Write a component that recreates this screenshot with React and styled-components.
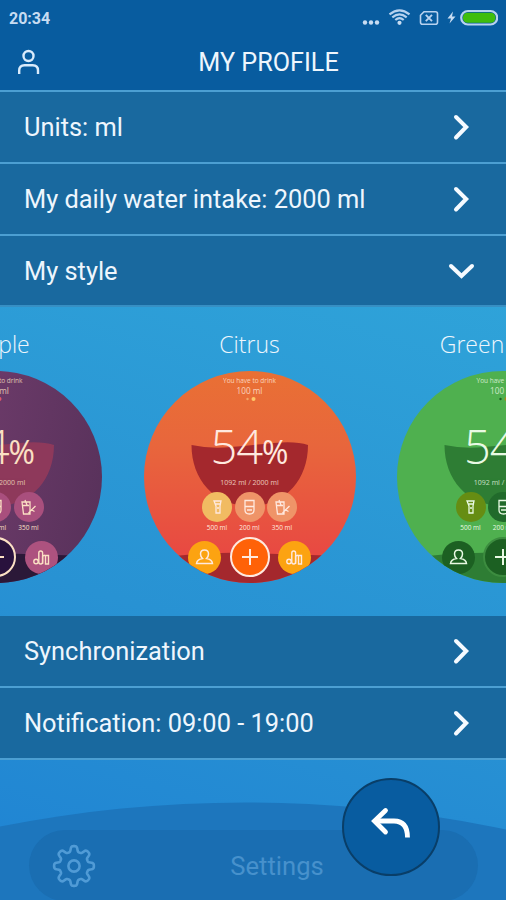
import React from "react";
import styled, { createGlobalStyle } from "styled-components";

const GlobalStyle = createGlobalStyle`
  * {
    box-sizing: border-box;
  }
  body {
    margin: 0;
    background: #0a5c9f;
  }
`;
const Screen = styled.div`
  width: 506px;
  height: 900px;
  overflow: hidden;
  display: flex;
  flex-direction: column;
  font-family: Roboto, sans-serif;
  color: #eef6fd;
  background: linear-gradient(197deg, #2fa3d9 28%, #2892d3 68%, #2085d3 95%);
`;
const StatusBar = styled.div`
  height: 36px;
  padding: 0 8px 0 9px;
  display: flex;
  align-items: center;
  justify-content: space-between;
  font-size: 16px;
  font-weight: 700;
  color: #c7dcf2;
`;
const Header = styled.div`
  height: 92px;
  flex: none;
  background: #085c9f;
  border-bottom: 2px solid #4c9fd2;
`;
const TitleBar = styled.div`
  height: 54px;
  padding: 0 18px 2px;
  display: flex;
  align-items: center;
`;
const Title = styled.div`
  flex: 1;
  padding: 2px 0 0 9px;
  text-align: center;
  font-size: 25.2px;
  line-height: 30px;
`;
const Row = styled.div`
  height: ${(props) => props.$height || 72}px;
  flex: none;
  padding: 0 31px 0 24px;
  display: flex;
  align-items: center;
  justify-content: space-between;
  font-size: 25.4px;
  background: #19699f;
  border-bottom: 2px solid ${(props) => props.$line || "#4c9fd2"};
`;
const Carousel = styled.div`
  height: 309px;
  flex: none;
  padding: 22px 7px 0 0;
  display: flex;
  justify-content: center;
  overflow: hidden;
`;
const Theme = styled.div`
  width: 253.5px;
  flex: none;
  display: flex;
  flex-direction: column;
  align-items: center;
  font-family: "Open Sans", sans-serif;
`;
const ThemeName = styled.div`
  height: 42px;
  padding-right: ${(props) => props.$shift || 0}px;
  line-height: 30px;
  font-size: 23px;
  font-weight: 300;
  white-space: nowrap;
`;
const Disc = styled.div`
  position: relative;
  width: 212px;
  height: 212px;
  border-radius: 50%;
  overflow: hidden;
  display: flex;
  flex-direction: column;
  align-items: center;
  color: ${(props) => props.$text};
  background: ${(props) => props.$fill};
`;
const Scene = styled.svg`
  position: absolute;
  inset: 0;
`;
const Line = styled.div`
  position: relative;
  flex: none;
  height: ${(props) => props.$height}px;
  line-height: ${(props) => props.$height}px;
  margin-top: ${(props) => props.$top || 0}px;
  font-size: ${(props) => props.$size}px;
  white-space: nowrap;
  opacity: 0.8;
`;
const Dots = styled.svg`
  position: relative;
  flex: none;
  display: block;
`;
const Percent = styled.div`
  position: relative;
  flex: none;
  margin-top: 14px;
  height: 60px;
  line-height: 60px;
  font-size: 47px;
  font-weight: 300;
  letter-spacing: -1px;
  white-space: nowrap;

  span {
    font-size: 32px;
    font-weight: 400;
    letter-spacing: 0;
  }
`;
const Cups = styled.div`
  position: relative;
  flex: none;
  margin-top: 3px;
  display: flex;
  gap: 2.5px;
`;
const Cup = styled.div`
  width: 30px;
  text-align: center;
  font-size: 6.5px;
  line-height: 11px;
  white-space: nowrap;
`;
const Round = styled.div`
  width: ${(props) => props.$size}px;
  height: ${(props) => props.$size}px;
  flex: none;
  border-radius: 50%;
  border: ${(props) => props.$border || "none"};
  background: ${(props) => props.$fill};
  display: flex;
  align-items: center;
  justify-content: center;
`;
const Nav = styled.div`
  position: relative;
  flex: none;
  margin-top: 4px;
  display: flex;
  align-items: center;
  gap: 8.5px;
`;
const Footer = styled.div`
  position: relative;
  flex: 1;
  overflow: hidden;
  padding: 70px 28px 0 29px;
`;
const Hill = styled.svg`
  position: absolute;
  left: 0;
  top: 0;
`;
const Settings = styled.div`
  position: relative;
  height: 71px;
  padding-left: 23px;
  border-radius: 36px;
  display: flex;
  align-items: center;
  font-size: 25.6px;
  color: #4791cc;
  background: #1a6eb2;
`;
const SettingsLabel = styled.div`
  flex: 1;
  padding-right: 20px;
  text-align: center;
`;
const BackButton = styled.div`
  position: absolute;
  left: 342px;
  top: 18px;
  width: 98px;
  height: 98px;
  border-radius: 50%;
  border: 2px solid #093e68;
  background: #085ca0;
  display: flex;
  align-items: center;
  justify-content: center;
`;

const themes = [
  {
    name: "Purple",
    fill: "linear-gradient(100deg, #6d3b6a 35%, #57315a 100%)",
    text: "#fbe0c4",
    bowl: "#8e395b",
    wave: "#2b1838",
    cups: ["#a94f7d", "#a94f7d", "#a94f7d"],
    nav: "#ad527f",
    plus: "#29123d",
    ring: "#fbe0c4",
    dots: ["#e0566a", "#e0566a"],
  },
  {
    name: "Citrus",
    fill: "linear-gradient(180deg, #e97034 0%, #e8663c 35%, #e84a42 85%)",
    text: "#ffe9df",
    bowl: "#a4282d",
    wave: "#a4282d",
    cups: ["#f1bb62", "#ef9468", "#ef9468"],
    nav: "#fca311",
    plus: "#ff6208",
    ring: "#ffe9df",
    dots: ["#f2a766", "#ffc768"],
  },
  {
    name: "Green",
    shift: 62,
    fill: "#4fb04f",
    text: "#e9fae4",
    bowl: "#2e7d34",
    wave: "#2e7d34",
    cups: ["#668d13", "#216a2b", "#216a2b"],
    nav: "#1c6022",
    plus: "#1c6022",
    ring: "#3c8c3f",
    dots: ["#1c6022", "#a58a1a"],
  },
];

const cupSizes = ["500 ml", "200 ml", "350 ml"];
const cupPaths = [
  "M6 3h7l-1 5v7H8V8zM7 6h5M9 10h2",
  "M5 2.500v9.500q0 4 4.500 4t4.500-4v-9.500zM5 8.500h9M7 12h5",
  "M3 4h8v12h-6.500zM4 7.500h6M6 2l2 5M9.500 15l7-7M12 11.500l3.500 2",
];

// eight rounded teeth drawn around the centre
function gearPath() {
  const points = [];
  for (let i = 0; i < 240; i++) {
    const a = (i / 240) * Math.PI * 2;
    const wave = Math.cos(a * 8);
    const r = 17.2 + 2.7 * (Math.tanh(wave * 2) / Math.tanh(2));
    points.push(
      (22 + r * Math.sin(a)).toFixed(2) + " " + (22 - r * Math.cos(a)).toFixed(2)
    );
  }
  return "M" + points.join("L") + "Z";
}

function Chevron({ down }) {
  return (
    <svg width="28" height="28" viewBox="0 0 28 28" fill="none" stroke="#f5faff" strokeWidth="4" strokeLinecap="round" strokeLinejoin="miter">
      <path d={down ? "M4 9L14.500 19L25 9" : "M9 4L19.200 14L9 24.500"} />
    </svg>
  );
}

function StatusIcons() {
  return (
    <svg width="138" height="24" viewBox="360 6 138 24" fill="none" stroke="#b8d2ef">
      <g fill="#c7dcf2" stroke="none">
        <circle cx="365" cy="22.500" r="2.200" />
        <circle cx="371" cy="22.500" r="2.200" />
        <circle cx="377" cy="22.500" r="2.200" />
        <circle cx="399.500" cy="22.800" r="2.100" />
        <path d="M453 11.500L447.500 18.500H451L449.500 23.500L455.500 16.500H452Z" />
      </g>
      <g strokeWidth="2.200">
        <path d="M389.500 14.300Q399.500 6.300 409.500 14.300" />
        <path d="M392.300 17.300Q399.500 11.300 406.700 17.300" />
        <path d="M395.300 20Q399.500 16.300 403.700 20" />
      </g>
      <path d="M424 11.800H435.500Q437.500 11.800 437.500 13.800V22.200Q437.500 24.200 435.500 24.200H422.500Q420.500 24.200 420.500 22.200V15.300Z" strokeWidth="1.600" />
      <path d="M425.800 14.800L432 21.200M432 14.800L425.800 21.200" strokeWidth="1.900" />
      <rect x="461.200" y="11" width="36" height="13.500" rx="6.700" strokeWidth="2.200" />
      <rect x="463" y="12.800" width="32.400" height="9.900" rx="4.500" fill="#3fbd0c" stroke="none" />
    </svg>
  );
}

function ThemePreview({ theme }) {
  return (
    <Theme>
      <ThemeName $shift={theme.shift}>{theme.name}</ThemeName>
      <Disc $fill={theme.fill} $text={theme.text}>
        <Scene width="212" height="212">
          <path d="M47.500 74Q66 78 87 76T130 72T164 74C164 110 140 135 106 135C70 135 47.500 108 47.500 74Z" fill={theme.bowl} />
          <path d="M0 189Q55 180 106 182T212 185V212H0Z" fill={theme.wave} />
        </Scene>
        <Line $top={5} $height={10} $size={6.5}>You have to drink</Line>
        <Line $height={10} $size={8.2}>100 ml</Line>
        <Dots width="14" height="6">
          <circle cx="4.500" cy="3" r="1.200" fill={theme.dots[0]} />
          <circle cx="10.500" cy="3" r="2" fill={theme.dots[1]} />
        </Dots>
        <Percent>54<span>%</span></Percent>
        <Line $top={1} $height={12} $size={7}>1092 ml / 2000 ml</Line>
        <Cups>
          {cupSizes.map((size, i) => (
            <Cup key={size}>
              <Round $size={30} $fill={theme.cups[i]}>
                <svg width="19" height="19" viewBox="0 0 19 19" fill="none" stroke={theme.text} strokeWidth="1.300">
                  <path d={cupPaths[i]} />
                </svg>
              </Round>
              {size}
            </Cup>
          ))}
        </Cups>
        <Nav>
          <Round $size={33} $fill={theme.nav}>
            <svg width="19" height="19" viewBox="0 0 19 19" fill="none" stroke={theme.text} strokeWidth="1.500">
              <path d="M7.500 10.500Q5.500 8.500 5.500 6Q5.500 2 9.500 2T13.500 6Q13.500 8.500 11.500 10.500Q17 11.500 17.500 15.500H1.500Q2 11.500 7.500 10.500Z" />
            </svg>
          </Round>
          <Round $size={40} $fill={theme.plus} $border={"2px solid " + theme.ring}>
            <svg width="18" height="18" viewBox="0 0 18 18" stroke={theme.text} strokeWidth="2">
              <path d="M9 1V17M1 9H17" />
            </svg>
          </Round>
          <Round $size={33} $fill={theme.nav}>
            <svg width="19" height="19" viewBox="0 0 19 19" fill="none" stroke={theme.text} strokeWidth="1.400">
              <circle cx="4" cy="13.500" r="2.200" />
              <rect x="6.800" y="3" width="3.800" height="13" rx="1.900" />
              <path d="M10.600 16V8.500Q12.500 6 13.500 8.500V16M13.500 16V7.500H16.500V16Z" />
            </svg>
          </Round>
        </Nav>
      </Disc>
    </Theme>
  );
}

function App() {
  return (
    <Screen>
      <GlobalStyle />
      <Header>
        <StatusBar>
          <div>20:34</div>
          <StatusIcons />
        </StatusBar>
        <TitleBar>
          <svg width="22" height="26" viewBox="0 0 22 26" fill="none" stroke="#d9ebfb" strokeWidth="2.400">
            <circle cx="10.500" cy="7" r="5" />
            <path d="M1.200 25V21.500Q1.200 16.200 6.500 16.200H14.700Q20 16.200 20 21.500V25" />
          </svg>
          <Title>MY PROFILE</Title>
        </TitleBar>
      </Header>
      <Row>Units: ml<Chevron /></Row>
      <Row>My daily water intake: 2000 ml<Chevron /></Row>
      <Row $height={71} $line="#378fc3">My style<Chevron down /></Row>
      <Carousel>
        {themes.map((theme) => (
          <ThemePreview key={theme.name} theme={theme} />
        ))}
      </Carousel>
      <Row>Synchronization<Chevron /></Row>
      <Row>Notification: 09:00 - 19:00<Chevron /></Row>
      <Footer>
        <Hill width="506" height="140">
          <circle cx="246" cy="1312" r="1269.500" fill="#1d76bd" />
        </Hill>
        <Settings>
          <svg width="44" height="44" viewBox="0 0 44 44" fill="none" stroke="#509bd6" strokeWidth="2.600">
            <path d={gearPath()} />
            <circle cx="22" cy="22" r="5.600" />
          </svg>
          <SettingsLabel>Settings</SettingsLabel>
        </Settings>
        <BackButton>
          <svg width="42" height="42" viewBox="0 0 42 42" fill="none" stroke="#fff" strokeWidth="4.800">
            <path d="M15.500 4.500L4.500 15L15.500 26" strokeLinecap="round" />
            <path d="M4.500 15H24Q37.500 15 37.500 31.500" />
          </svg>
        </BackButton>
      </Footer>
    </Screen>
  );
}

export default App;
